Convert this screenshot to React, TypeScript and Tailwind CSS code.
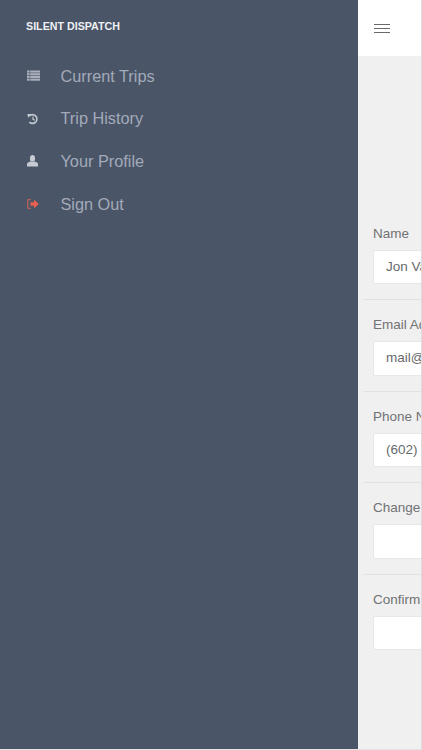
import React from "react";

const font = "font-['Liberation_Sans',Arial,sans-serif]";

function ListIcon() {
  return (
    <svg width="13" height="11" viewBox="0 0 13 11" fill="#aab1bd">
      <rect x="0" y="0.5" width="2.6" height="2.1" />
      <rect x="3.2" y="0.5" width="9.8" height="2.1" />
      <rect x="0" y="3.2" width="2.6" height="2.1" />
      <rect x="3.2" y="3.2" width="9.8" height="2.1" />
      <rect x="0" y="5.9" width="2.6" height="2.1" />
      <rect x="3.2" y="5.9" width="9.8" height="2.1" />
      <rect x="0" y="8.6" width="2.6" height="2.1" />
      <rect x="3.2" y="8.6" width="9.8" height="2.1" />
    </svg>
  );
}

function HistoryIcon() {
  return (
    <svg width="12" height="12" viewBox="0 0 12 12" fill="none" stroke="#c3c8d0">
      <path d="M2.4 2.9A4.4 4.4 0 1 1 2.4 9.1" strokeWidth="1.6" />
      <path d="M0.4 0.9L4.6 1.1L1.1 4.8Z" fill="#c3c8d0" stroke="none" />
      <path d="M6 3.6V6.3L7.8 7.3" strokeWidth="1.2" />
    </svg>
  );
}

function UserIcon() {
  return (
    <svg width="11" height="12" viewBox="0 0 11 12" fill="#c6cad2">
      <path d="M3 2.6C3 1 4.1 0 5.5 0S8 1 8 2.6V4.4C8 5.2 7.6 5.8 7.2 6.2H3.8C3.4 5.8 3 5.2 3 4.4Z" />
      <path d="M0 11.6V8.9C0 7.6 1.6 6.9 3.4 6.4H7.6C9.4 6.9 11 7.6 11 8.9V11.6Z" />
    </svg>
  );
}

function SignOutIcon() {
  return (
    <svg width="12" height="10" viewBox="0 0 12 10" fill="none">
      <path d="M4 0.7H1.4C0.9 0.7 0.7 1 0.7 1.4V8.6C0.7 9 0.9 9.3 1.4 9.3H4" stroke="#b9615f" strokeWidth="1.3" />
      <path d="M3.5 3.2H7V0.6L11.8 5L7 9.4V6.8H3.5Z" fill="#e8604f" />
    </svg>
  );
}

function NavItem({ icon, label }: { icon: React.ReactNode; label: string }) {
  return (
    <div className="flex h-[42.7px] items-center">
      <span className="flex w-[34.5px] items-center pl-px">{icon}</span>
      <span className="text-[16.3px] text-[#a3aab8]">{label}</span>
    </div>
  );
}

function Field({ label, value, last }: { label: string; value?: string; last?: boolean }) {
  return (
    <div className={`w-[300px] pl-[10px] ${last ? "" : "mb-[17px] border-b border-[#e2e2e2] pb-[15px]"}`}>
      <div className="mb-[8px] h-[16px] whitespace-nowrap text-[13.5px] leading-[16px] text-[#707274]">{label}</div>
      <div className="flex h-[34.5px] items-center whitespace-nowrap rounded-[2px] border border-[#e8e8e9] bg-white pl-[12px] text-[13.5px] text-[#676a6c]">
        {value}
      </div>
    </div>
  );
}

export default function App() {
  return (
    <div className={`flex h-[750px] w-[422px] overflow-hidden bg-[#e4e4e4] ${font}`}>
      <aside className="h-[749px] w-[358px] shrink-0 bg-[#4a5568] pl-[26px]">
        <div className="flex h-[53px] items-center text-[10.7px] font-bold text-[#eef0f3]">SILENT DISPATCH</div>
        <nav className="mt-[1.5px]">
          <NavItem icon={<ListIcon />} label="Current Trips" />
          <NavItem icon={<HistoryIcon />} label="Trip History" />
          <NavItem icon={<UserIcon />} label="Your Profile" />
          <NavItem icon={<SignOutIcon />} label="Sign Out" />
        </nav>
      </aside>
      <main className="flex h-[749px] w-[63px] shrink-0 flex-col overflow-hidden bg-[#f0f0f0]">
        <header className="flex h-[56px] shrink-0 flex-col justify-center gap-[3px] bg-white pl-[16px]">
          <div className="h-px w-[16px] bg-[#676a6c]" />
          <div className="h-px w-[16px] bg-[#676a6c]" />
          <div className="h-px w-[16px] bg-[#676a6c]" />
        </header>
        <div className="pl-[5px] pt-[169.5px]">
          <Field label="Name" value="Jon Vance" />
          <Field label="Email Address" value="mail@example.com" />
          <Field label="Phone Number" value="(602) 555-0142" />
          <Field label="Change Password" />
          <Field label="Confirm Password" last />
        </div>
      </main>
      <div className="h-[749px] w-px shrink-0 bg-[#dcdcdc]" />
    </div>
  );
}
